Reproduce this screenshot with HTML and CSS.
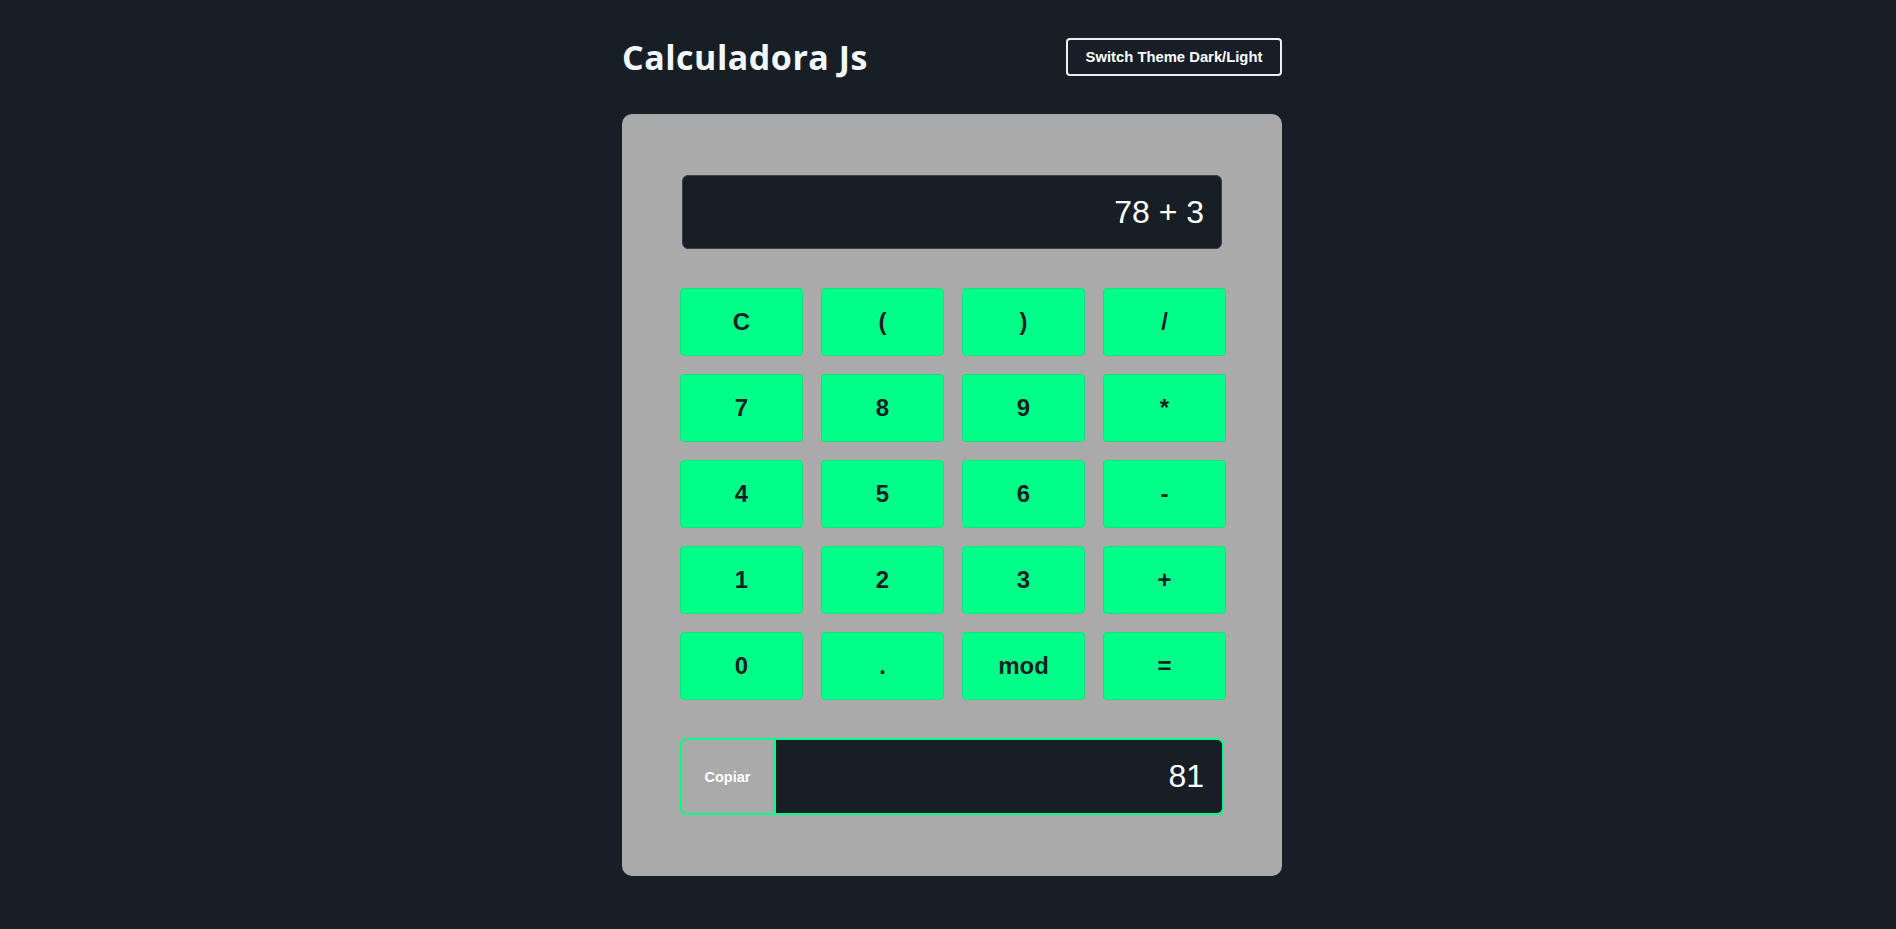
FILE: index.html
```html
<!DOCTYPE html>
<html lang="pt">
<head>
<meta charset="utf-8">
<title>Calculadora Js</title>
<link rel="stylesheet" href="styles.css">
</head>
<body>
<div class="app">
  <header class="top">
    <h1 class="title">Calculadora Js</h1>
    <button class="theme-btn">Switch Theme Dark/Light</button>
  </header>
  <main class="calc">
    <div class="display">78 + 3</div>
    <div class="keys">
      <button class="key">C</button>
      <button class="key">(</button>
      <button class="key">)</button>
      <button class="key">/</button>
      <button class="key">7</button>
      <button class="key">8</button>
      <button class="key">9</button>
      <button class="key">*</button>
      <button class="key">4</button>
      <button class="key">5</button>
      <button class="key">6</button>
      <button class="key">-</button>
      <button class="key">1</button>
      <button class="key">2</button>
      <button class="key">3</button>
      <button class="key">+</button>
      <button class="key">0</button>
      <button class="key">.</button>
      <button class="key">mod</button>
      <button class="key">=</button>
    </div>
    <div class="result">
      <button class="copy">Copiar</button>
      <div class="output">81</div>
    </div>
  </main>
</div>
</body>
</html>
```
FILE: styles.css
```css
* { box-sizing: border-box; }
html, body { margin: 0; padding: 0; }
body {
  background: #181e25;
  font-family: "Liberation Sans", Arial, sans-serif;
  padding-left: 8px;
}
.app {
  width: 660px;
  margin: 0 auto;
  padding-top: 38px;
}
.top {
  display: flex;
  justify-content: space-between;
  align-items: center;
  height: 38px;
  margin-bottom: 38px;
}
.title {
  margin: 0;
  font-family: "Open Sans", Lato, sans-serif;
  font-weight: 700;
  font-size: 34px;
  letter-spacing: 0.5px;
  color: #f4f7fb;
  line-height: 1;
}
.theme-btn {
  width: 216px;
  height: 38px;
  background: #181e25;
  border: 2px solid #eef0f2;
  border-radius: 4px;
  color: #ffffff;
  font-family: "Liberation Sans", Arial, sans-serif;
  font-weight: 700;
  font-size: 14.8px;
  padding: 0;
}
.calc {
  background: #aaaaaa;
  border-radius: 10px;
  padding: 61px 58px;
}
.display {
  margin: 0 2px;
  height: 74px;
  background: #181e25;
  border: 1px solid #3a3f44;
  border-radius: 6px;
  color: #ffffff;
  font-size: 32px;
  display: flex;
  align-items: center;
  justify-content: flex-end;
  padding-right: 17px;
}
.keys {
  margin-top: 39px;
  display: grid;
  grid-template-columns: repeat(4, 123px);
  grid-auto-rows: 68px;
  gap: 18px;
}
.key {
  background: #00ff88;
  border: 1px solid #14e07c;
  border-radius: 4px;
  color: #181e25;
  font-family: "Liberation Sans", Arial, sans-serif;
  font-weight: 700;
  font-size: 24px;
  padding: 0;
}
.result {
  margin-top: 38px;
  height: 77px;
  border: 2px solid #00ff88;
  border-radius: 7px;
  display: flex;
  overflow: hidden;
}
.copy {
  width: 94px;
  flex: none;
  background: #aaaaaa;
  border: none;
  border-right: 3px solid #00ff88;
  color: #ffffff;
  font-family: "Liberation Sans", Arial, sans-serif;
  font-weight: 700;
  font-size: 14.5px;
  padding: 0;
}
.output {
  flex: 1;
  background: #181e25;
  color: #ffffff;
  font-size: 32px;
  display: flex;
  align-items: center;
  justify-content: flex-end;
  padding-right: 18px;
}
```
